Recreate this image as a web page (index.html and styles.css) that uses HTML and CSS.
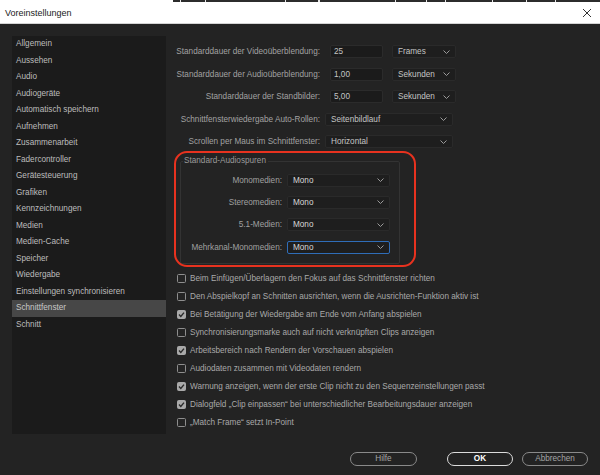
FILE: index.html
```html
<!DOCTYPE html>
<html lang="de">
<head>
<meta charset="utf-8">
<title>Voreinstellungen</title>
<link rel="stylesheet" href="styles.css">
</head>
<body>
<div class="topstrip"></div>
<div class="titlebar">
  <span class="title">Voreinstellungen</span>
  <svg class="close" width="10" height="10" viewBox="0 0 10 10"><path d="M1 1 L9 9 M9 1 L1 9" stroke="#333" stroke-width="1" fill="none"/></svg>
</div>
<div class="dialog">
  <div class="main">
    <ul class="sidebar">
      <li>Allgemein</li>
      <li>Aussehen</li>
      <li>Audio</li>
      <li>Audiogeräte</li>
      <li>Automatisch speichern</li>
      <li>Aufnehmen</li>
      <li>Zusammenarbeit</li>
      <li>Fadercontroller</li>
      <li>Gerätesteuerung</li>
      <li>Grafiken</li>
      <li>Kennzeichnungen</li>
      <li>Medien</li>
      <li>Medien-Cache</li>
      <li>Speicher</li>
      <li>Wiedergabe</li>
      <li>Einstellungen synchronisieren</li>
      <li class="active">Schnittfenster</li>
      <li>Schnitt</li>
    </ul>
    <div class="content">
      <div class="row">
        <span class="label">Standarddauer der Videoüberblendung:</span>
        <span class="field">25</span>
        <span class="select small">Frames<svg class="chev" width="7" height="4" viewBox="0 0 7 4"><polyline points="0.5,0.5 3.5,3.5 6.5,0.5" fill="none" stroke="#9a9a9a" stroke-width="1"/></svg></span>
      </div>
      <div class="row">
        <span class="label">Standarddauer der Audioüberblendung:</span>
        <span class="field">1,00</span>
        <span class="select small">Sekunden<svg class="chev" width="7" height="4" viewBox="0 0 7 4"><polyline points="0.5,0.5 3.5,3.5 6.5,0.5" fill="none" stroke="#9a9a9a" stroke-width="1"/></svg></span>
      </div>
      <div class="row">
        <span class="label">Standarddauer der Standbilder:</span>
        <span class="field">5,00</span>
        <span class="select small">Sekunden<svg class="chev" width="7" height="4" viewBox="0 0 7 4"><polyline points="0.5,0.5 3.5,3.5 6.5,0.5" fill="none" stroke="#9a9a9a" stroke-width="1"/></svg></span>
      </div>
      <div class="row">
        <span class="label">Schnittfensterwiedergabe Auto-Rollen:</span>
        <span class="select wide">Seitenbildlauf<svg class="chev" width="7" height="4" viewBox="0 0 7 4"><polyline points="0.5,0.5 3.5,3.5 6.5,0.5" fill="none" stroke="#9a9a9a" stroke-width="1"/></svg></span>
      </div>
      <div class="row">
        <span class="label">Scrollen per Maus im Schnittfenster:</span>
        <span class="select wide">Horizontal<svg class="chev" width="7" height="4" viewBox="0 0 7 4"><polyline points="0.5,0.5 3.5,3.5 6.5,0.5" fill="none" stroke="#9a9a9a" stroke-width="1"/></svg></span>
      </div>

      <div class="group-wrap">
        <fieldset class="group">
          <legend>Standard-Audiospuren</legend>
          <div class="grow">
            <span class="glabel">Monomedien:</span>
            <span class="select gsel">Mono<svg class="chev" width="7" height="4" viewBox="0 0 7 4"><polyline points="0.5,0.5 3.5,3.5 6.5,0.5" fill="none" stroke="#9a9a9a" stroke-width="1"/></svg></span>
          </div>
          <div class="grow">
            <span class="glabel">Stereomedien:</span>
            <span class="select gsel">Mono<svg class="chev" width="7" height="4" viewBox="0 0 7 4"><polyline points="0.5,0.5 3.5,3.5 6.5,0.5" fill="none" stroke="#9a9a9a" stroke-width="1"/></svg></span>
          </div>
          <div class="grow">
            <span class="glabel">5.1-Medien:</span>
            <span class="select gsel">Mono<svg class="chev" width="7" height="4" viewBox="0 0 7 4"><polyline points="0.5,0.5 3.5,3.5 6.5,0.5" fill="none" stroke="#9a9a9a" stroke-width="1"/></svg></span>
          </div>
          <div class="grow">
            <span class="glabel">Mehrkanal-Monomedien:</span>
            <span class="select gsel focus">Mono<svg class="chev" width="7" height="4" viewBox="0 0 7 4"><polyline points="0.5,0.5 3.5,3.5 6.5,0.5" fill="none" stroke="#9a9a9a" stroke-width="1"/></svg></span>
          </div>
        </fieldset>
        <div class="highlight"></div>
      </div>

      <ul class="checks">
        <li><span class="cb"></span>Beim Einfügen/Überlagern den Fokus auf das Schnittfenster richten</li>
        <li><span class="cb"></span>Den Abspielkopf an Schnitten ausrichten, wenn die Ausrichten-Funktion aktiv ist</li>
        <li><span class="cb on"><svg width="9" height="9" viewBox="0 0 9 9"><path d="M2 4.6 L3.8 6.4 L7 2.6" fill="none" stroke="#2a2a2a" stroke-width="1.4"/></svg></span>Bei Betätigung der Wiedergabe am Ende vom Anfang abspielen</li>
        <li><span class="cb"></span>Synchronisierungsmarke auch auf nicht verknüpften Clips anzeigen</li>
        <li><span class="cb on"><svg width="9" height="9" viewBox="0 0 9 9"><path d="M2 4.6 L3.8 6.4 L7 2.6" fill="none" stroke="#2a2a2a" stroke-width="1.4"/></svg></span>Arbeitsbereich nach Rendern der Vorschauen abspielen</li>
        <li><span class="cb"></span>Audiodaten zusammen mit Videodaten rendern</li>
        <li><span class="cb on"><svg width="9" height="9" viewBox="0 0 9 9"><path d="M2 4.6 L3.8 6.4 L7 2.6" fill="none" stroke="#2a2a2a" stroke-width="1.4"/></svg></span>Warnung anzeigen, wenn der erste Clip nicht zu den Sequenzeinstellungen passt</li>
        <li><span class="cb on"><svg width="9" height="9" viewBox="0 0 9 9"><path d="M2 4.6 L3.8 6.4 L7 2.6" fill="none" stroke="#2a2a2a" stroke-width="1.4"/></svg></span>Dialogfeld „Clip einpassen“ bei unterschiedlicher Bearbeitungsdauer anzeigen</li>
        <li><span class="cb"></span>„Match Frame“ setzt In-Point</li>
      </ul>
    </div>
  </div>
  <div class="footer">
    <button class="btn help">Hilfe</button>
    <button class="btn ok">OK</button>
    <button class="btn cancel">Abbrechen</button>
  </div>
</div>
</body>
</html>
```

FILE: styles.css
```css
html, body {
  margin: 0;
  padding: 0;
  width: 600px;
  height: 475px;
  overflow: hidden;
  background: #232323;
  font-family: "Liberation Sans", Arial, sans-serif;
  font-size: 8.2px;
}

.topstrip {
  height: 2px;
  background: linear-gradient(to right,
    #ffffff 0 173px, #2c2c2c 173px 180px, #e8e8e8 180px 181px, #2c2c2c 181px 205px,
    #e8e8e8 205px 206px, #2c2c2c 206px 285px, #e8e8e8 285px 286px, #2c2c2c 286px 318px,
    #e8e8e8 318px 320px, #2c2c2c 320px 395px, #e8e8e8 395px 396px, #2c2c2c 396px 426px,
    #e8e8e8 426px 427px, #2c2c2c 427px 445px, #e8e8e8 445px 446px, #2c2c2c 446px 492px,
    #e8e8e8 492px 493px, #2c2c2c 493px 526px, #e8e8e8 526px 527px, #2c2c2c 527px 555px,
    #e8e8e8 555px 556px, #2c2c2c 556px 600px);
}

.titlebar {
  height: 21px;
  background: #ffffff;
  border-bottom: 1px solid #d4d4d4;
  display: flex;
  align-items: center;
  justify-content: space-between;
  padding: 0 8px 0 5px;
}

.title {
  font-size: 9px;
  color: #1a1a1a;
}

.close {
  display: block;
}

.dialog {
  display: flex;
  flex-direction: column;
}

.main {
  display: flex;
  padding: 12px 12px 0 12px;
  height: 398px;
}

.sidebar {
  list-style: none;
  margin: 0;
  padding: 0;
  width: 154px;
  height: 398px;
  background: #1b1b1b;
  flex: none;
}

.sidebar li {
  height: 16.5px;
  line-height: 16.5px;
  padding-left: 4px;
  color: #bdbdbd;
  white-space: nowrap;
}

.sidebar li.active {
  background: #474747;
  color: #c8c8c8;
}

.content {
  margin-left: 11px;
  padding-top: 9px;
  flex: 1;
  display: flex;
  flex-direction: column;
}

.row {
  display: flex;
  align-items: center;
  height: 13px;
  margin-bottom: 9.5px;
}

.label {
  width: 143px;
  flex: none;
  display: flex;
  justify-content: flex-end;
  white-space: nowrap;
  color: #a2a2a2;
  margin-right: 5px;
}

.field {
  box-sizing: border-box;
  width: 53px;
  height: 13px;
  margin-left: 5px;
  margin-right: 9px;
  background: #1b1b1b;
  border: 1px solid #2b2b2b;
  border-radius: 2px;
  color: #c4c4c4;
  padding-left: 3px;
  line-height: 11px;
}

.select {
  box-sizing: border-box;
  height: 13px;
  background: #1e1e1e;
  border: 1px solid #2a2a2a;
  border-radius: 2px;
  color: #c4c4c4;
  padding-left: 5px;
  padding-right: 5px;
  line-height: 11px;
  display: flex;
  align-items: center;
  justify-content: space-between;
  white-space: nowrap;
}

.select.small {
  width: 64px;
}

.select.wide {
  width: 128px;
}

.chev {
  display: block;
  flex: none;
}

.group-wrap {
  position: relative;
  margin-top: -1.5px;
  margin-left: 3px;
  width: 220px;
}

.group {
  margin: 0;
  padding: 7.5px 9px 9.3px 0;
  border: 1px solid #333333;
  border-radius: 2px;
  min-width: 0;
}

.group legend {
  padding: 0 2px 0 1px;
  margin-left: 2px;
  line-height: 10px;
  height: 10px;
  color: #9a9a9a;
}

.grow {
  display: flex;
  align-items: center;
  height: 13px;
  margin-bottom: 9.4px;
}

.grow:last-child {
  margin-bottom: 0;
}

.glabel {
  width: 101px;
  flex: none;
  display: flex;
  justify-content: flex-end;
  white-space: nowrap;
  color: #a0a0a0;
  margin-right: 5px;
}

.select.gsel {
  width: 104px;
  color: #d6d6d6;
  padding-left: 5px;
}

.select.focus {
  border-color: #2f6db8;
}

.highlight {
  position: absolute;
  left: -6px;
  top: -5px;
  width: 242px;
  height: 116px;
  box-sizing: border-box;
  border: 2.5px solid #e8321f;
  border-radius: 13px;
  pointer-events: none;
}

.checks {
  list-style: none;
  margin: 5.3px 0 0 0;
  padding: 0;
}

.checks li {
  height: 18px;
  display: flex;
  align-items: center;
  color: #a9a9a9;
  white-space: nowrap;
}

.cb {
  box-sizing: border-box;
  width: 9px;
  height: 9px;
  border: 1px solid #8e8e8e;
  border-radius: 1.5px;
  background: #242424;
  margin-right: 4px;
  flex: none;
  display: flex;
}

.cb.on {
  background: #a9a9a9;
  border-color: #a9a9a9;
}

.cb svg {
  display: block;
  margin: -1px;
}

.footer {
  display: flex;
  justify-content: flex-end;
  padding: 18px 12px 0 0;
}

.btn {
  box-sizing: border-box;
  height: 14px;
  width: 66px;
  padding: 0;
  border: 1px solid #8a8a8a;
  border-radius: 8px;
  background: #232323;
  color: #a4a4a4;
  font-family: "Liberation Sans", Arial, sans-serif;
  font-size: 8.2px;
  line-height: 12px;
}

.btn.help {
  width: 67px;
  margin-right: 30px;
}

.btn.ok {
  border-color: #dcdcdc;
  color: #ffffff;
  font-weight: bold;
  margin-right: 9px;
}
```
